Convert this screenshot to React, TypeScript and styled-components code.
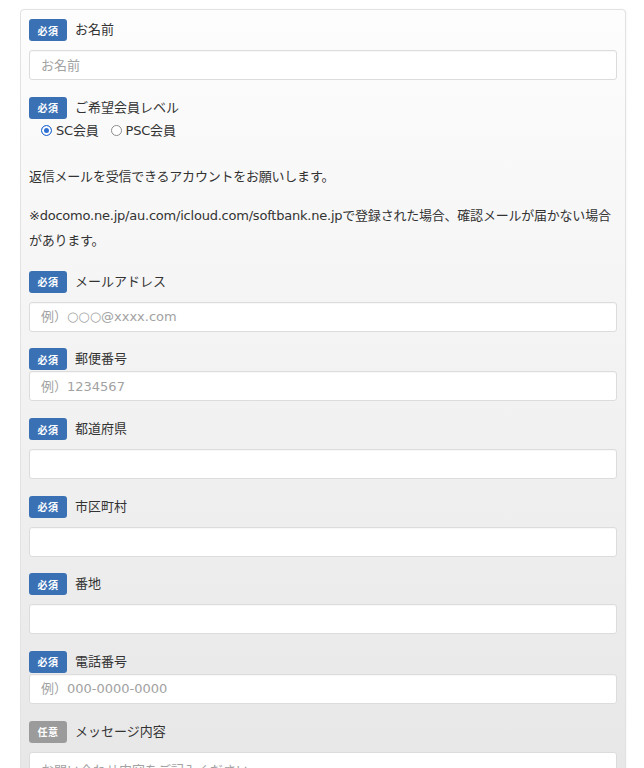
import React from "react";
import styled, { createGlobalStyle } from "styled-components";

const GlobalStyle = createGlobalStyle`
  html, body { margin: 0; padding: 0; background: #ffffff; }
  body {
    font-family: "DejaVu Sans", "Noto Sans CJK JP", sans-serif;
    font-size: 13px;
    color: #333333;
  }
  * { box-sizing: border-box; }
`;

const Panel = styled.form`
  margin: 9px 18px 0 20px;
  width: 606px;
  padding: 9px 8px 40px 8px;
  border: 1px solid #e2e2e2;
  border-radius: 4px;
  background-color: #e6e6e6;
  background-image: linear-gradient(to bottom, #fdfdfd 0px, #e6e6e6 800px);
  background-repeat: no-repeat;
  box-shadow: 1px 0 2px rgba(0, 0, 0, 0.03);
`;

const Group = styled.div<{ $tight?: boolean }>`
  display: flex;
  flex-direction: column;
  margin-bottom: ${(p) => (p.$tight ? "17px" : "16.5px")};
`;

const LabelRow = styled.div`
  display: flex;
  align-items: center;
  gap: 8px;
  height: 22px;
`;

const Badge = styled.span<{ $optional?: boolean }>`
  display: inline-flex;
  align-items: center;
  justify-content: center;
  width: 38px;
  height: 22px;
  border-radius: 3px;
  background: ${(p) => (p.$optional ? "#9b9b9b" : "#3a71b5")};
  color: #ffffff;
  font-family: "Noto Sans CJK JP", sans-serif;
  font-size: 10px;
  font-weight: 700;
  letter-spacing: 0.5px;
`;

const LabelText = styled.label`
  font-size: 13px;
  line-height: 22px;
  color: #333333;
`;

const TextInput = styled.input<{ $tight?: boolean }>`
  display: block;
  width: 100%;
  height: 30px;
  margin-top: ${(p) => (p.$tight ? "1px" : "9px")};
  padding: 0 11px;
  border: 1px solid #dcdcdc;
  border-radius: 3px;
  background: #ffffff;
  box-shadow: inset 0 1px 1px rgba(0, 0, 0, 0.03);
  font-family: "DejaVu Sans", "Noto Sans CJK JP", sans-serif;
  font-size: 13px;
  color: #333333;
  outline: none;
  &::placeholder { color: #a2a2a2; }
`;

const TextArea = styled.textarea`
  display: block;
  width: 100%;
  height: 130px;
  margin-top: 9px;
  padding: 8px 11px;
  border: 1px solid #dcdcdc;
  border-radius: 3px;
  background: #ffffff;
  font-family: "DejaVu Sans", "Noto Sans CJK JP", sans-serif;
  font-size: 13px;
  line-height: 1.5;
  resize: vertical;
  outline: none;
  &::placeholder { color: #a2a2a2; }
`;

const RadioRow = styled.div`
  display: flex;
  align-items: center;
  padding-left: 12px;
  height: 20px;
  margin-top: 2px;
  margin-bottom: 23.5px;
`;

const RadioLabel = styled.label`
  display: inline-flex;
  align-items: center;
  gap: 4px;
  margin-right: 12px;
  line-height: 20px;
  font-size: 13px;
  letter-spacing: -0.2px;
  color: #333333;
`;

const Radio = styled.input`
  appearance: none;
  -webkit-appearance: none;
  margin: 0;
  width: 11px;
  height: 11px;
  border-radius: 50%;
  border: 1px solid #8d8d8d;
  background: #ffffff;
  &:checked {
    border-color: #2e6fd3;
    background: #2e6fd3;
    box-shadow: inset 0 0 0 2px #ffffff;
  }
`;

const Note = styled.p`
  margin: 0 0 14px 0;
  font-size: 13px;
  line-height: 25px;
  letter-spacing: -0.22px;
  color: #333333;
  &:last-of-type { margin-bottom: 17.5px; }
`;

type FieldProps = {
  label: string;
  placeholder?: string;
  tight?: boolean;
  optional?: boolean;
};

const Field = ({ label, placeholder, tight, optional }: FieldProps) => (
  <Group $tight={tight}>
    <LabelRow>
      <Badge $optional={optional}>{optional ? "任意" : "必須"}</Badge>
      <LabelText>{label}</LabelText>
    </LabelRow>
    <TextInput $tight={tight} placeholder={placeholder} />
  </Group>
);

export default function App() {
  return (
    <>
      <GlobalStyle />
      <Panel onSubmit={(e) => e.preventDefault()}>
        <Field label="お名前" placeholder="お名前" />

        <LabelRow>
          <Badge>必須</Badge>
          <LabelText>ご希望会員レベル</LabelText>
        </LabelRow>
        <RadioRow>
          <RadioLabel>
            <Radio type="radio" name="level" defaultChecked />
            SC会員
          </RadioLabel>
          <RadioLabel>
            <Radio type="radio" name="level" />
            PSC会員
          </RadioLabel>
        </RadioRow>

        <Note>返信メールを受信できるアカウントをお願いします。</Note>
        <Note>
          ※docomo.ne.jp/au.com/icloud.com/softbank.ne.jpで登録された場合、確認メールが届かない場合があります。
        </Note>

        <Field label="メールアドレス" placeholder="例）○○○@xxxx.com" />
        <Field label="郵便番号" placeholder="例）1234567" tight />
        <Field label="都道府県" />
        <Field label="市区町村" />
        <Field label="番地" />
        <Field label="電話番号" placeholder="例）000-0000-0000" tight />

        <Group>
          <LabelRow>
            <Badge $optional>任意</Badge>
            <LabelText>メッセージ内容</LabelText>
          </LabelRow>
          <TextArea placeholder="お問い合わせ内容をご記入ください" />
        </Group>
      </Panel>
    </>
  );
}
